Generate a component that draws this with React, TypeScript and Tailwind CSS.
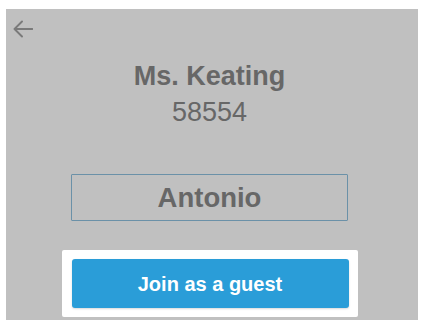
export default function App() {
  return (
    <div
      className="w-[425px] h-[331px] bg-white pt-[9px] pl-[6px]"
      style={{ fontFamily: '"Liberation Sans", Arial, sans-serif' }}
    >
      <div className="w-[412px] h-[311px] bg-[#c0c0c0] flex flex-col items-center pr-[5px]">
        {/* back arrow */}
        <div className="self-stretch pt-[11px] pl-[7px]">
          <svg width="20" height="18" viewBox="0 0 20 18" fill="none">
            <path
              d="M19.5 9H1.5M9 1.5L1.5 9L9 16.5"
              stroke="#7a7a7a"
              strokeWidth="1.9"
              strokeLinecap="round"
              strokeLinejoin="round"
            />
          </svg>
        </div>

        <div className="mt-[23px] text-[27px] leading-[31px] font-bold text-[#676767]">
          Ms. Keating
        </div>
        <div className="mt-[5px] text-[27px] leading-[31px] text-[#676767]">58554</div>

        <div className="mt-[46px] w-[277px] h-[47px] border border-[#6b91a8] rounded-[1px] flex items-center justify-center text-[27.5px] font-bold text-[#676767]">
          Antonio
        </div>

        <div className="mt-[29px] bg-white pt-[9px] pb-[9px] pl-[10px] pr-[9px] rounded-[2px]">
          <button className="w-[277px] h-[49px] bg-[#2a9dd8] rounded-[3px] shadow-[0_1px_2px_rgba(0,0,0,0.15)] text-white text-[20px] font-bold flex items-center justify-center">
            Join as a guest
          </button>
        </div>
      </div>
    </div>
  );
}
